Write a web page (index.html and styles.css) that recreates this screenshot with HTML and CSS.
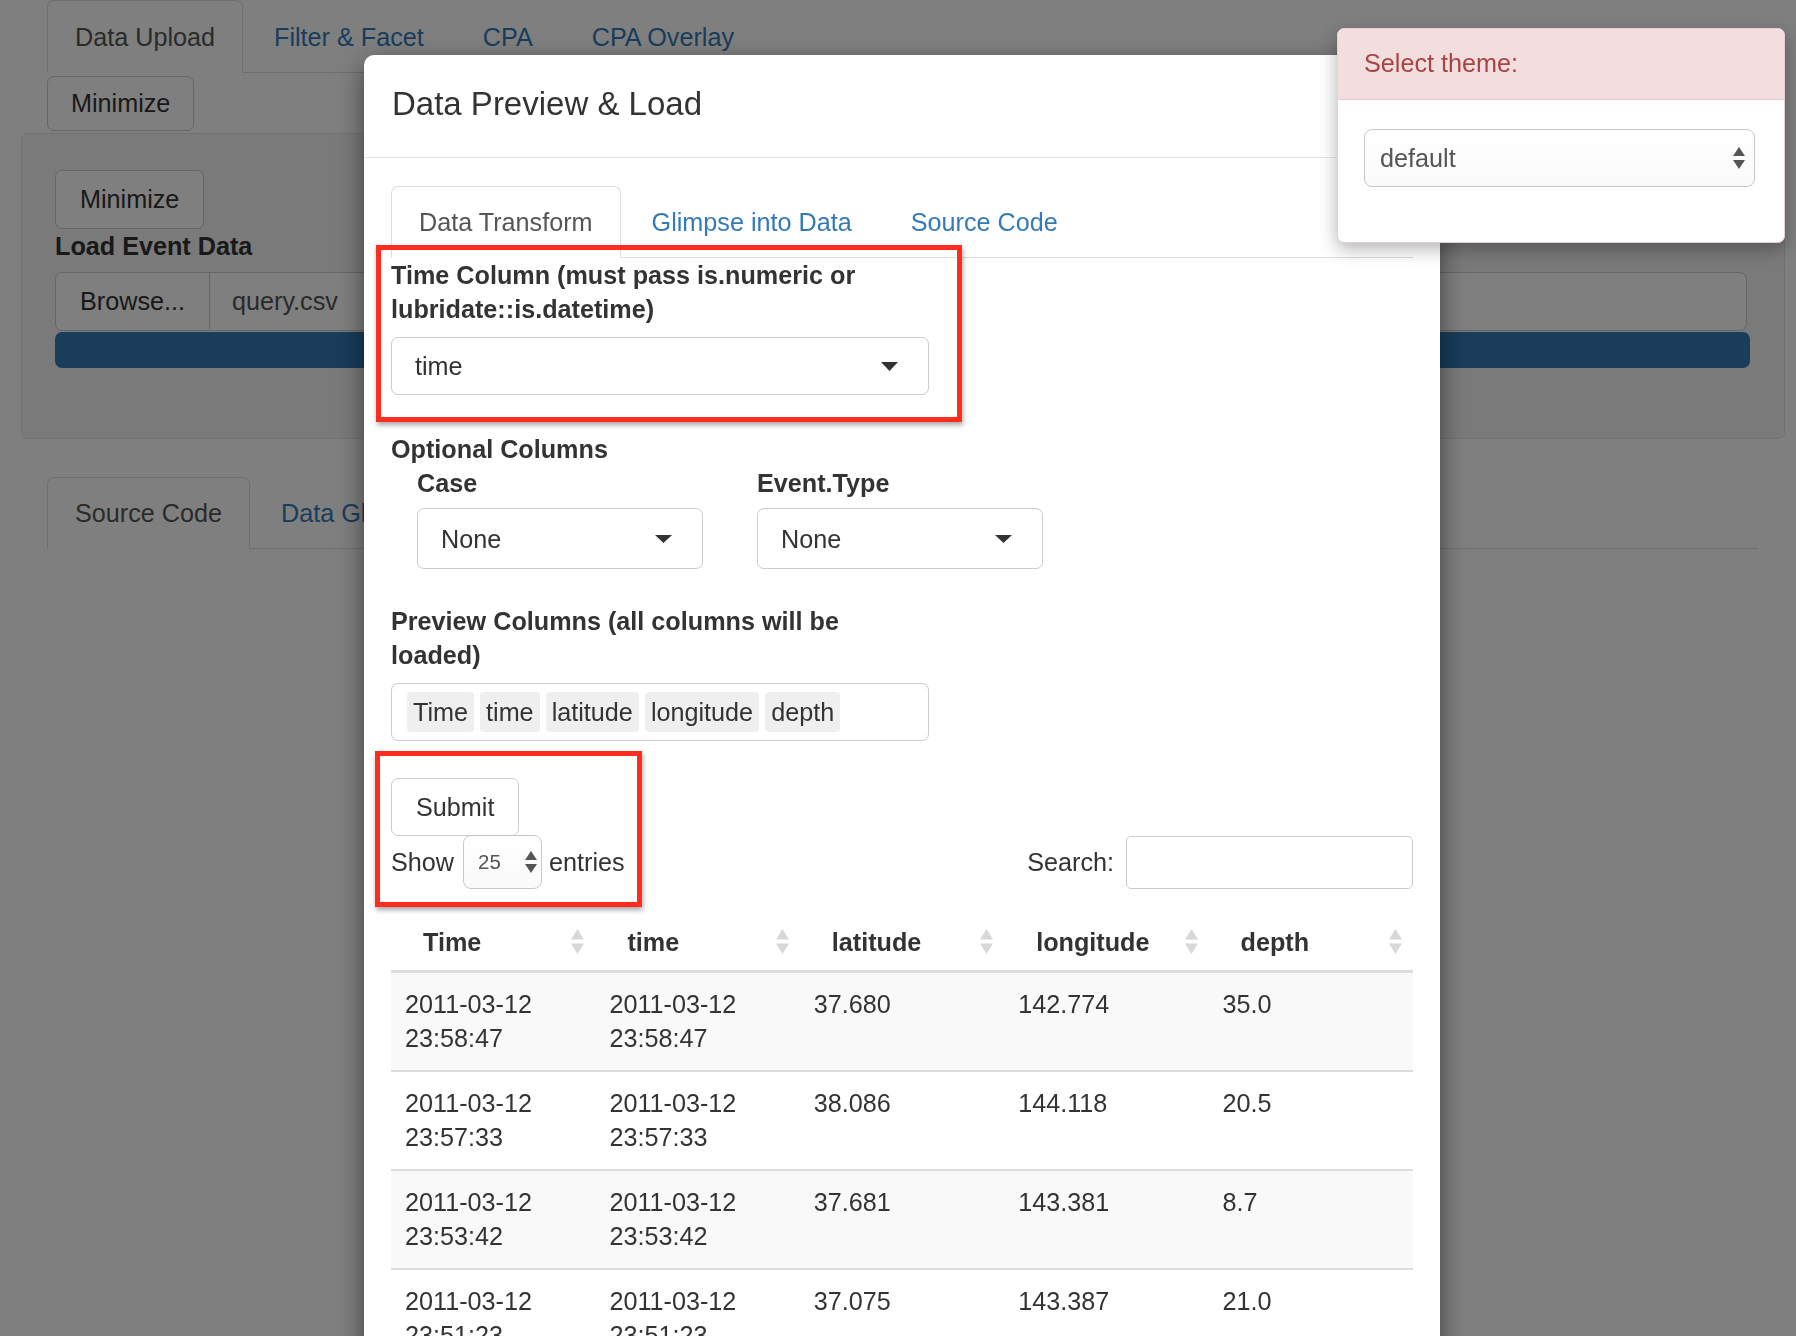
FILE: index.html
```html
<!DOCTYPE html>
<html lang="en">
<head>
<meta charset="utf-8">
<title>Data Preview &amp; Load</title>
<link rel="stylesheet" href="styles.css">
</head>
<body>
<div class="page">
  <ul class="nav-tabs top-tabs">
    <li class="active"><a>Data Upload</a></li>
    <li><a>Filter &amp; Facet</a></li>
    <li><a>CPA</a></li>
    <li><a>CPA Overlay</a></li>
  </ul>
  <div class="min1"><span class="btn">Minimize</span></div>
  <div class="well">
    <span class="btn btn-tall">Minimize</span>
    <div class="bold load-label">Load Event Data</div>
    <div class="input-group">
      <span class="btn browse">Browse...</span>
      <span class="file-name">query.csv</span>
    </div>
    <div class="progress"></div>
  </div>
  <ul class="nav-tabs lower-tabs">
    <li class="active"><a>Source Code</a></li>
    <li><a>Data Glimpse</a></li>
  </ul>
</div>

<div class="backdrop"></div>

<div class="modal">
  <div class="modal-header">
    <h4 class="modal-title">Data Preview &amp; Load</h4>
  </div>
  <div class="modal-body">
    <ul class="nav-tabs modal-tabs">
      <li class="active"><a>Data Transform</a></li>
      <li><a>Glimpse into Data</a></li>
      <li><a>Source Code</a></li>
    </ul>
    <div class="tab-content">
      <div class="form-group">
        <div class="control-label bold">Time Column (must pass is.numeric or lubridate::is.datetime)</div>
        <div class="sel sel-wide"><span>time</span><svg class="caret" width="17" height="9" viewBox="0 0 17 9"><path d="M0 0 H17 L8.5 9 Z" fill="#333"/></svg></div>
      </div>

      <div class="bold">Optional Columns</div>
      <div class="row form-group-row">
        <div class="col">
          <div class="bold col-label">Case</div>
          <div class="sel sel-small"><span>None</span><svg class="caret" width="17" height="8" viewBox="0 0 17 8"><path d="M0 0 H17 L8.5 8 Z" fill="#333"/></svg></div>
        </div>
        <div class="col">
          <div class="bold col-label">Event.Type</div>
          <div class="sel sel-small"><span>None</span><svg class="caret" width="17" height="8" viewBox="0 0 17 8"><path d="M0 0 H17 L8.5 8 Z" fill="#333"/></svg></div>
        </div>
      </div>

      <div class="form-group">
        <div class="control-label bold">Preview Columns (all columns will be loaded)</div>
        <div class="multi">
          <span class="chip">Time</span><span class="chip">time</span><span class="chip">latitude</span><span class="chip">longitude</span><span class="chip">depth</span>
        </div>
      </div>

      <div class="submit-wrap"><span class="btn btn-submit">Submit</span></div>

      <div class="dt-top">
        <div class="dt-length">
          <span>Show</span>
          <span class="native-sel small-sel"><span>25</span><svg width="12" height="22" viewBox="0 0 12 22"><path d="M6 0 L12 9 H0 Z M0 13 H12 L6 22 Z" fill="#555"/></svg></span>
          <span>entries</span>
        </div>
        <div class="dt-search">
          <span>Search:</span>
          <span class="search-input"></span>
        </div>
      </div>

      <table class="dt">
        <thead>
          <tr>
            <th>Time<svg class="sort" width="13" height="25" viewBox="0 0 13 25"><path d="M6.5 0 L13 10.5 H0 Z M0 14.5 H13 L6.5 25 Z" fill="#d8d8d8"/></svg></th>
            <th>time<svg class="sort" width="13" height="25" viewBox="0 0 13 25"><path d="M6.5 0 L13 10.5 H0 Z M0 14.5 H13 L6.5 25 Z" fill="#d8d8d8"/></svg></th>
            <th>latitude<svg class="sort" width="13" height="25" viewBox="0 0 13 25"><path d="M6.5 0 L13 10.5 H0 Z M0 14.5 H13 L6.5 25 Z" fill="#d8d8d8"/></svg></th>
            <th>longitude<svg class="sort" width="13" height="25" viewBox="0 0 13 25"><path d="M6.5 0 L13 10.5 H0 Z M0 14.5 H13 L6.5 25 Z" fill="#d8d8d8"/></svg></th>
            <th>depth<svg class="sort" width="13" height="25" viewBox="0 0 13 25"><path d="M6.5 0 L13 10.5 H0 Z M0 14.5 H13 L6.5 25 Z" fill="#d8d8d8"/></svg></th>
          </tr>
        </thead>
        <tbody>
          <tr class="odd"><td>2011-03-12 23:58:47</td><td>2011-03-12 23:58:47</td><td>37.680</td><td>142.774</td><td>35.0</td></tr>
          <tr><td>2011-03-12 23:57:33</td><td>2011-03-12 23:57:33</td><td>38.086</td><td>144.118</td><td>20.5</td></tr>
          <tr class="odd"><td>2011-03-12 23:53:42</td><td>2011-03-12 23:53:42</td><td>37.681</td><td>143.381</td><td>8.7</td></tr>
          <tr><td>2011-03-12 23:51:23</td><td>2011-03-12 23:51:23</td><td>37.075</td><td>143.387</td><td>21.0</td></tr>
        </tbody>
      </table>
    </div>
  </div>
  <div class="mark mark-time"></div>
  <div class="mark mark-submit"></div>
</div>

<div class="theme-panel">
  <div class="theme-head">Select theme:</div>
  <div class="theme-body">
    <span class="native-sel theme-sel"><span>default</span><svg width="12" height="22" viewBox="0 0 12 22"><path d="M6 0 L12 9 H0 Z M0 13 H12 L6 22 Z" fill="#555"/></svg></span>
  </div>
</div>
</body>
</html>
```

FILE: styles.css
```css
* { box-sizing: border-box; }

html, body {
  margin: 0;
  padding: 0;
  width: 1796px;
  height: 1336px;
  overflow: hidden;
  background: #fff;
  font-family: "Liberation Sans", Arial, sans-serif;
  font-size: 25.2px;
  line-height: 34px;
  color: #333;
}

.bold { font-weight: bold; }

/* ---------- background page ---------- */
.nav-tabs {
  display: flex;
  list-style: none;
  margin: 0;
  padding: 0;
  border-bottom: 1px solid #ddd;
}
.nav-tabs li { margin-bottom: -1px; margin-right: 3px; }
.nav-tabs a {
  display: block;
  padding: 18px 27px;
  border: 1px solid transparent;
  border-radius: 7px 7px 0 0;
  color: #337ab7;
  text-decoration: none;
}
.nav-tabs li.active a {
  color: #555;
  background: #fff;
  border-color: #ddd;
  border-bottom-color: transparent;
}

.top-tabs { margin-left: 47px; width: 1711px; }
.top-tabs a { padding-top: 19px; }

.btn {
  display: inline-block;
  padding: 10px 23px;
  border: 1px solid #ccc;
  border-radius: 7px;
  background: #fff;
  color: #333;
  line-height: 33px;
}
.btn-tall { padding: 12px 24px; }

.min1 { padding: 3px 0 0 47px; }

.well {
  margin: 2px 0 0 21px;
  width: 1764px;
  height: 306px;
  padding: 36px 34px 0 33px;
  background: #f5f5f5;
  border: 1px solid #e3e3e3;
  border-radius: 7px;
}
.input-group {
  display: flex;
  margin-top: 9px;
  height: 59px;
  width: 1692px;
}
.browse {
  padding: 12px 24px;
  border-radius: 7px 0 0 7px;
}
.file-name {
  flex: 1;
  border: 1px solid #ccc;
  border-left: 0;
  border-radius: 0 7px 7px 0;
  background: #fff;
  padding: 12px 22px;
  line-height: 33px;
  color: #555;
}
.progress {
  margin-top: 1px;
  height: 36px;
  background: #337ab7;
  border-radius: 7px;
}

.lower-tabs { margin: 38px 0 0 47px; width: 1711px; }

/* ---------- overlay ---------- */
.backdrop {
  position: fixed;
  inset: 0;
  background: rgba(0, 0, 0, 0.5);
  z-index: 10;
}

.modal {
  position: absolute;
  left: 364px;
  top: 55px;
  width: 1076px;
  min-height: 1400px;
  background: #fff;
  border-radius: 10px;
  box-shadow: 0 9px 26px rgba(0, 0, 0, 0.5);
  z-index: 20;
}
.modal-header {
  padding: 26px 28px 30px;
  border-bottom: 1px solid #e5e5e5;
}
.modal-title {
  margin: 0;
  font-size: 33px;
  line-height: 46px;
  font-weight: normal;
  color: #333;
}
.modal-body { padding: 28px 27px 27px; }

.control-label {
  max-width: 500px;
  margin-bottom: 11px;
}
.form-group { margin-bottom: 37px; }
.form-group-row { margin-bottom: 35px; }

.sel {
  display: flex;
  align-items: center;
  justify-content: space-between;
  height: 58px;
  border: 1px solid #ccc;
  border-radius: 7px;
  padding: 0 30px 0 23px;
  background: #fff;
}
.sel-wide { width: 538px; }
.sel-small { width: 286px; height: 61px; padding-right: 30px; }

.row { display: flex; }
.col { width: 340px; padding-left: 26px; }
.col-label { margin-bottom: 8px; }

.multi {
  display: flex;
  align-items: center;
  width: 538px;
  height: 58px;
  border: 1px solid #ccc;
  border-radius: 7px;
  padding: 0 15px;
}
.chip {
  background: #efefef;
  border-radius: 4px;
  padding: 3px 6px;
  margin-right: 6px;
  line-height: 34px;
}

.submit-wrap { height: 58px; }
.btn-submit { padding: 11px 24px; line-height: 34px; }

.dt-top {
  display: flex;
  justify-content: space-between;
  align-items: center;
  height: 54px;
  margin-top: -1px;
}
.dt-length { display: flex; align-items: center; }
.native-sel {
  display: inline-flex;
  align-items: center;
  justify-content: space-between;
  border: 1px solid #c8c8c8;
  border-radius: 8px;
  background: linear-gradient(#fff, #fafafa);
  color: #555;
}
.small-sel {
  width: 79px;
  height: 54px;
  margin: 0 7px 0 9px;
  padding: 0 4px 0 14px;
  font-size: 20.5px;
}
.dt-search { display: flex; align-items: center; }
.search-input {
  display: inline-block;
  width: 287px;
  height: 53px;
  margin-left: 12px;
  border: 1px solid #ccc;
  border-radius: 5px;
}

.dt {
  margin-top: 15px;
  width: 1022px;
  table-layout: fixed;
  border-collapse: separate;
  border-spacing: 0;
}
.dt th {
  position: relative;
  text-align: left;
  padding: 21px 31px 11px 32px;
  border-bottom: 3px solid #ddd;
  font-weight: bold;
}
.dt .sort {
  position: absolute;
  right: 11px;
  top: 25px;
}
.dt td {
  padding: 14px 14px 15px;
  vertical-align: top;
}
.dt tbody tr + tr td { border-top: 2px solid #ddd; }
.dt tr.odd td { background: #f9f9f9; }

/* annotation boxes */
.mark {
  position: absolute;
  border: 5px solid #ff2d1f;
  box-shadow: 1px 3px 5px rgba(0, 0, 0, 0.35);
}
.mark-time { left: 12px; top: 190px; width: 586px; height: 177px; }
.mark-submit { left: 11px; top: 696px; width: 267px; height: 156px; }

/* theme panel */
.theme-panel {
  position: absolute;
  left: 1337px;
  top: 28px;
  width: 448px;
  height: 215px;
  background: #fff;
  border: 1px solid #ebccd1;
  border-radius: 7px;
  box-shadow: 0 6px 18px rgba(0, 0, 0, 0.3);
  z-index: 30;
  overflow: hidden;
}
.theme-head {
  background: #f2dede;
  color: #a94442;
  padding: 17px 26px 19px;
  border-bottom: 1px solid #ebccd1;
}
.theme-body { padding: 29px 29px 0 26px; }
.theme-sel {
  width: 391px;
  height: 58px;
  padding: 0 9px 0 15px;
}
```
